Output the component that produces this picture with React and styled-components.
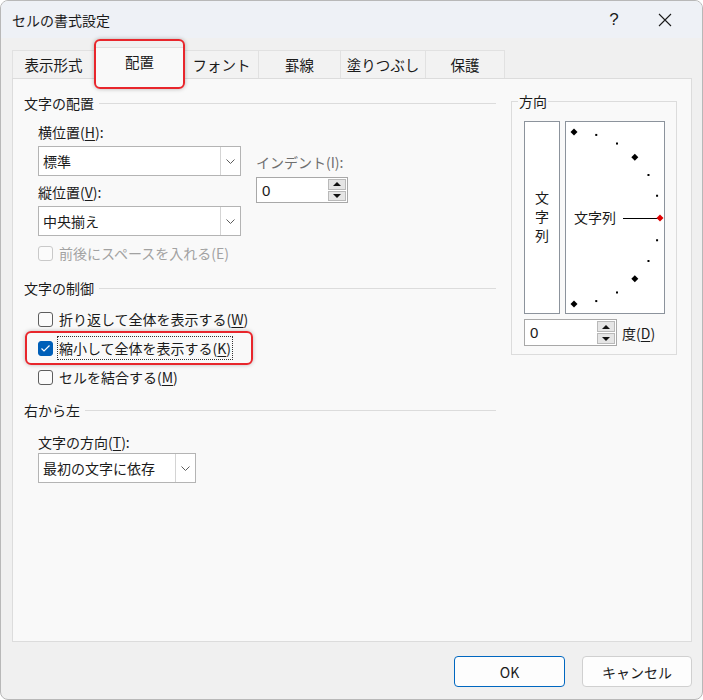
import React from "react";
import styled, { createGlobalStyle } from "styled-components";

const GlobalStyle = createGlobalStyle`
  html, body { margin: 0; padding: 0; background: #ffffff; }
  body {
    font-family: "Noto Sans CJK JP", "Noto Sans", "Liberation Sans", sans-serif;
    font-size: 14px;
    color: #1b1b1b;
  }
  * { box-sizing: border-box; }
`;

const TABS = [
  { label: "表示形式", w: 83 },
  { label: "配置", w: 91, active: true },
  { label: "フォント", w: 75 },
  { label: "罫線", w: 83 },
  { label: "塗りつぶし", w: 86 },
  { label: "保護", w: 80 },
];

function Mn({ children }) {
  return <U>{children}</U>;
}

function Chevron() {
  return (
    <svg width="9" height="5" viewBox="0 0 9 5">
      <path d="M0.5 0.5 L4.5 4.5 L8.5 0.5" fill="none" stroke="#5c5c5c" strokeWidth="1" />
    </svg>
  );
}

function Select({ value, width }) {
  return (
    <SelectBox $w={width}>
      <SelectValue>{value}</SelectValue>
      <SelectArrow>
        <Chevron />
      </SelectArrow>
    </SelectBox>
  );
}

function Spin({ width, height }) {
  return (
    <SpinBox $w={width} $h={height}>
      <SpinValue>0</SpinValue>
      <SpinButtons>
        <SpinBtn>
          <svg width="8" height="4" viewBox="0 0 8 4">
            <path d="M0 4 L4 0 L8 4 Z" fill="#111" />
          </svg>
        </SpinBtn>
        <SpinBtn>
          <svg width="8" height="4" viewBox="0 0 8 4">
            <path d="M0 0 L8 0 L4 4 Z" fill="#111" />
          </svg>
        </SpinBtn>
      </SpinButtons>
    </SpinBox>
  );
}

function Check({ checked, disabled, focused, highlight, mt, children }) {
  return (
    <CheckRow $mt={mt} $highlight={highlight}>
      <Box $checked={checked} $disabled={disabled}>
        {checked && (
          <svg width="11" height="9" viewBox="0 0 11 9">
            <path d="M1.5 4.5 L4 7 L9.5 1.5" fill="none" stroke="#fff" strokeWidth="1.2" />
          </svg>
        )}
      </Box>
      <CheckText $disabled={disabled} $focused={focused}>
        {children}
      </CheckText>
    </CheckRow>
  );
}

function Arc() {
  const cx = 8;
  const cy = 96;
  const r = 86;
  const items = [];
  for (let a = 90; a >= -90; a -= 15) {
    const rad = (a * Math.PI) / 180;
    const x = cx + r * Math.cos(rad);
    const y = cy - r * Math.sin(rad);
    if (a === 0) continue;
    if (a % 45 === 0) {
      items.push(
        <path key={a} d={`M${x} ${y - 3.5} L${x + 3.5} ${y} L${x} ${y + 3.5} L${x - 3.5} ${y} Z`} fill="#000" />
      );
    } else {
      items.push(<rect key={a} x={x - 1} y={y - 1} width="2" height="2" fill="#000" />);
    }
  }
  return (
    <svg width="98" height="191" viewBox="0 0 98 191">
      {items}
      <text x="8" y="101" fontSize="14" fill="#1b1b1b" fontFamily="Noto Sans CJK JP, sans-serif">
        文字列
      </text>
      <line x1="57" y1="96.5" x2="92" y2="96.5" stroke="#000" strokeWidth="1" />
      <path d="M94 92.5 L97.5 96 L94 99.5 L90.5 96 Z" fill="#e00000" />
    </svg>
  );
}

export default function App() {
  return (
    <>
      <GlobalStyle />
      <Window>
        <TitleBar>
          <Title>セルの書式設定</Title>
          <TitleButton $w={50}>?</TitleButton>
          <TitleButton $w={52}>
            <svg width="14" height="14" viewBox="0 0 14 14">
              <path d="M1 1 L13 13 M13 1 L1 13" stroke="#1b1b1b" strokeWidth="1.1" />
            </svg>
          </TitleButton>
        </TitleBar>

        <Body>
          <Tabs>
            {TABS.map((t) => (
              <Tab key={t.label} $w={t.w} $active={t.active}>
                {t.label}
              </Tab>
            ))}
          </Tabs>

          <Panel>
            <LeftCol>
              <SectionHeader>
                <span>文字の配置</span>
                <Rule />
              </SectionHeader>
              <Indent>
                <FieldLabel $mt={9}>
                  横位置(<Mn>H</Mn>):
                </FieldLabel>
                <FieldRow>
                  <SelectCol>
                    <SelectWrap $mt={4}>
                      <Select value="標準" width={203} />
                    </SelectWrap>
                    <FieldLabel $mt={6}>
                      縦位置(<Mn>V</Mn>):
                    </FieldLabel>
                    <SelectWrap $mt={4}>
                      <Select value="中央揃え" width={203} />
                    </SelectWrap>
                  </SelectCol>
                  <IndentCol>
                    <FieldLabel $muted>インデント(I):</FieldLabel>
                    <SpinWrap>
                      <Spin width={92} height={26} />
                    </SpinWrap>
                  </IndentCol>
                </FieldRow>
                <Check disabled mt={7}>
                  前後にスペースを入れる(E)
                </Check>
              </Indent>

              <SectionHeader $mt={15}>
                <span>文字の制御</span>
                <Rule />
              </SectionHeader>
              <Indent>
                <Check mt={11}>
                  折り返して全体を表示する(<Mn>W</Mn>)
                </Check>
                <Check checked focused highlight mt={9}>
                  縮小して全体を表示する(<Mn>K</Mn>)
                </Check>
                <Check mt={9}>
                  セルを結合する(<Mn>M</Mn>)
                </Check>
              </Indent>

              <SectionHeader $mt={13}>
                <span>右から左</span>
                <Rule />
              </SectionHeader>
              <Indent>
                <FieldLabel $mt={12}>
                  文字の方向(<Mn>T</Mn>):
                </FieldLabel>
                <SelectWrap $mt={1}>
                  <Select value="最初の文字に依存" width={158} />
                </SelectWrap>
              </Indent>
            </LeftCol>

            <Group>
              <Legend>方向</Legend>
              <OrientRow>
                <VerticalBox>
                  <VerticalText>文字列</VerticalText>
                </VerticalBox>
                <ArcBox>
                  <Arc />
                </ArcBox>
              </OrientRow>
              <DegreeRow>
                <Spin width={93} height={27} />
                <DegreeLabel>
                  度(<Mn>D</Mn>)
                </DegreeLabel>
              </DegreeRow>
            </Group>
          </Panel>

          <Footer>
            <Button $w={111} $primary>
              OK
            </Button>
            <Button $w={110}>キャンセル</Button>
          </Footer>
        </Body>
      </Window>
    </>
  );
}

const Window = styled.div`
  width: 703px;
  height: 700px;
  display: flex;
  flex-direction: column;
  background: #f0f0f0;
  border: 1px solid #b8b8b8;
  border-radius: 8px;
  overflow: hidden;
`;

const TitleBar = styled.div`
  height: 37px;
  display: flex;
  align-items: center;
  padding: 0 11px 0 11px;
  background: #eef1f6;
`;

const Title = styled.div`
  flex: 1;
  font-size: 14px;
  line-height: 20px;
`;

const TitleButton = styled.div`
  width: ${(p) => p.$w}px;
  height: 37px;
  display: flex;
  align-items: center;
  justify-content: center;
  font-family: "Liberation Sans", sans-serif;
  font-size: 17px;
  color: #1b1b1b;
`;

const Body = styled.div`
  flex: 1;
  display: flex;
  flex-direction: column;
  padding: 12px 10px 0 11px;
`;

const Tabs = styled.div`
  height: 28px;
  display: flex;
  align-items: flex-end;
  position: relative;
  z-index: 1;
`;

const Tab = styled.div`
  position: relative;
  width: ${(p) => p.$w}px;
  height: ${(p) => (p.$active ? 32 : 28)}px;
  margin-left: -1px;
  margin-bottom: ${(p) => (p.$active ? -1 : 0)}px;
  display: flex;
  align-items: center;
  justify-content: center;
  padding-bottom: ${(p) => (p.$active ? 3 : 0)}px;
  background: ${(p) => (p.$active ? "#f9f9f9" : "#f2f2f2")};
  border: 1px solid #e1e1e1;
  border-bottom: none;
  font-size: 14.5px;
  line-height: 20px;
  z-index: ${(p) => (p.$active ? 2 : 0)};

  &:first-child {
    margin-left: 0;
  }

  ${(p) =>
    p.$active &&
    `
    &::after {
      content: "";
      position: absolute;
      left: -1px;
      right: -1px;
      top: -9px;
      height: 46px;
      border: 2px solid #e8262c;
      border-radius: 6px;
      box-shadow: 0 0 4px rgba(0, 0, 0, 0.28);
    }
  `}
`;

const Panel = styled.div`
  height: 564px;
  display: flex;
  align-items: flex-start;
  padding: 14px 0 0 11px;
  background: #f9f9f9;
  border: 1px solid #dcdcdc;
`;

const LeftCol = styled.div`
  width: 472px;
  display: flex;
  flex-direction: column;
`;

const SectionHeader = styled.div`
  display: flex;
  align-items: center;
  height: 20px;
  line-height: 20px;
  margin-top: ${(p) => p.$mt || 0}px;
`;

const Rule = styled.div`
  flex: 1;
  height: 1px;
  margin-left: 5px;
  background: #dcdcdc;
`;

const Indent = styled.div`
  display: flex;
  flex-direction: column;
  align-items: flex-start;
  padding-left: 14px;
`;

const FieldLabel = styled.div`
  height: 20px;
  line-height: 20px;
  margin-top: ${(p) => p.$mt || 0}px;
  color: ${(p) => (p.$muted ? "#6f6f6f" : "#1b1b1b")};
  white-space: nowrap;
`;

const U = styled.span`
  text-decoration: underline;
  text-underline-offset: 2px;
`;

const FieldRow = styled.div`
  display: flex;
`;

const SelectCol = styled.div`
  width: 203px;
  display: flex;
  flex-direction: column;
`;

const IndentCol = styled.div`
  margin-left: 15px;
  padding-top: 10px;
  display: flex;
  flex-direction: column;
`;

const SpinWrap = styled.div`
  margin-top: 5px;
`;

const SelectWrap = styled.div`
  margin-top: ${(p) => p.$mt || 0}px;
`;

const SelectBox = styled.div`
  width: ${(p) => p.$w}px;
  height: 30px;
  display: flex;
  background: #ffffff;
  border: 1px solid #b4b4b4;
`;

const SelectValue = styled.div`
  flex: 1;
  padding-left: 4px;
  line-height: 28px;
  white-space: nowrap;
`;

const SelectArrow = styled.div`
  width: 20px;
  display: flex;
  align-items: center;
  justify-content: center;
  border-left: 1px solid #d4d4d4;
`;

const SpinBox = styled.div`
  width: ${(p) => p.$w}px;
  height: ${(p) => p.$h}px;
  display: flex;
  background: #ffffff;
  border: 1px solid #a8a8a8;
`;

const SpinValue = styled.div`
  flex: 1;
  padding-left: 5px;
  display: flex;
  align-items: center;
  font-family: "Liberation Sans", sans-serif;
  font-size: 15px;
`;

const SpinButtons = styled.div`
  width: 20px;
  display: flex;
  flex-direction: column;
  padding: 1px;
  gap: 1px;
`;

const SpinBtn = styled.div`
  flex: 1;
  display: flex;
  align-items: center;
  justify-content: center;
  background: #e5e5e5;
  border: 1px solid #b9b9b9;
`;

const CheckRow = styled.div`
  position: relative;
  display: flex;
  align-items: center;
  height: 20px;
  margin-top: ${(p) => p.$mt || 0}px;

  ${(p) =>
    p.$highlight &&
    `
    &::after {
      content: "";
      position: absolute;
      left: -13px;
      top: -7px;
      width: 224px;
      height: 30px;
      border: 2px solid #e8262c;
      border-radius: 6px;
      box-shadow: 0 0 4px rgba(0, 0, 0, 0.25);
      pointer-events: none;
    }
  `}
`;

const Box = styled.div`
  width: 15px;
  height: 15px;
  display: flex;
  align-items: center;
  justify-content: center;
  border-radius: 3px;
  border: 1px solid
    ${(p) => (p.$checked ? "#005fb8" : p.$disabled ? "#c9c9c9" : "#5e5e5e")};
  background: ${(p) => (p.$checked ? "#005fb8" : "#fbfbfb")};
`;

const CheckText = styled.span`
  margin-left: ${(p) => (p.$focused ? 4 : 6)}px;
  padding: ${(p) => (p.$focused ? "1px 1px" : "0")};
  border: ${(p) => (p.$focused ? "1px dotted #333" : "none")};
  line-height: 20px;
  white-space: nowrap;
  color: ${(p) => (p.$disabled ? "#a2a2a2" : "#1b1b1b")};
`;

const Group = styled.div`
  position: relative;
  width: 166px;
  height: 254px;
  margin: 8px 0 0 15px;
  padding: 19px 0 0 12px;
  border: 1px solid #dcdcdc;
`;

const Legend = styled.div`
  position: absolute;
  top: -11px;
  left: 6px;
  padding: 0 1px;
  line-height: 20px;
  background: #f9f9f9;
`;

const OrientRow = styled.div`
  display: flex;
  gap: 5px;
`;

const VerticalBox = styled.div`
  width: 36px;
  height: 193px;
  display: flex;
  align-items: center;
  justify-content: center;
  background: #ffffff;
  border: 1px solid #8c939c;
`;

const VerticalText = styled.div`
  writing-mode: vertical-rl;
  text-orientation: upright;
  letter-spacing: 5px;
  line-height: 20px;
  margin-top: 4px;
`;

const ArcBox = styled.div`
  width: 100px;
  height: 193px;
  background: #ffffff;
  border: 1px solid #8c939c;
`;

const DegreeRow = styled.div`
  display: flex;
  align-items: center;
  margin-top: 5px;
`;

const DegreeLabel = styled.div`
  margin-left: 5px;
  line-height: 20px;
`;

const Footer = styled.div`
  display: flex;
  justify-content: flex-end;
  gap: 17px;
  padding-top: 14px;
`;

const Button = styled.div`
  width: ${(p) => p.$w}px;
  height: 31px;
  display: flex;
  align-items: center;
  justify-content: center;
  background: #fdfdfd;
  border: 1px solid ${(p) => (p.$primary ? "#0067c0" : "#d0d0d0")};
  border-radius: 4px;
  font-size: 14px;
`;
